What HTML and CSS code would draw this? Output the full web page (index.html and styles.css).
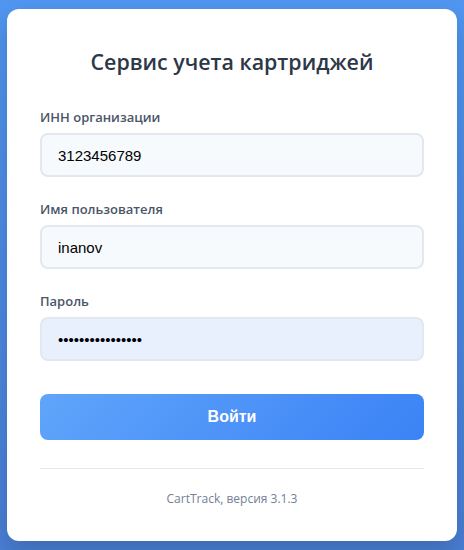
FILE: index.html
```html
<!DOCTYPE html>
<html lang="ru">
<head>
<meta charset="utf-8">
<title>Сервис учета картриджей</title>
<link rel="stylesheet" href="styles.css">
</head>
<body>
<main class="card">
  <h1 class="title">Сервис учета картриджей</h1>
  <form class="form">
    <div class="field">
      <label class="label" for="inn">ИНН организации</label>
      <input class="input" id="inn" type="text" value="3123456789">
    </div>
    <div class="field">
      <label class="label" for="user">Имя пользователя</label>
      <input class="input" id="user" type="text" value="inanov">
    </div>
    <div class="field">
      <label class="label" for="pass">Пароль</label>
      <input class="input input-filled" id="pass" type="password" value="1234567890123456">
    </div>
    <button class="button" type="button">Войти</button>
  </form>
  <hr class="divider">
  <p class="footer">CartTrack, версия 3.1.3</p>
</main>
</body>
</html>
```
FILE: styles.css
```css
* { box-sizing: border-box; }
html, body { height: 100%; }
body {
  margin: 0;
  min-height: 100vh;
  display: flex;
  align-items: center;
  justify-content: center;
  background: linear-gradient(180deg, #5096f1 0%, #4b88e2 60%, #4a7fd5 100%);
  font-family: "Open Sans", "Noto Sans", sans-serif;
}
.card {
  width: 450px;
  background: #ffffff;
  border-radius: 12px;
  padding: 38px 33px 33px;
  box-shadow: 0 10px 25px rgba(0, 0, 0, 0.18);
}
.title {
  margin: 0 0 31px;
  font-size: 21.4px;
  line-height: 29px;
  font-weight: 600;
  color: #2d3748;
  text-align: center;
}
.form { display: flex; flex-direction: column; }
.field { display: flex; flex-direction: column; margin-bottom: 22px; }
.label {
  font-size: 13px;
  line-height: 20px;
  font-weight: 600;
  color: #4a5568;
  margin-bottom: 6px;
}
.input {
  height: 44px;
  border: 2px solid #e2e8f0;
  border-radius: 8px;
  background: #f7fafc;
  padding: 0 16px;
  font-family: "Liberation Sans", Arial, sans-serif;
  font-size: 15px;
  color: #000;
  outline: none;
}
.input-filled { background: #e8f0fe; }
.button {
  margin-top: 11px;
  height: 46px;
  border: none;
  border-radius: 8px;
  background: linear-gradient(135deg, #60a5fa 0%, #3b82f6 100%);
  color: #fff;
  font-family: "Liberation Sans", Arial, sans-serif;
  font-size: 16px;
  font-weight: 700;
}
.divider {
  margin: 28px 0 0;
  border: none;
  border-top: 1px solid #e2e8f0;
}
.footer {
  margin: 21px 0 0;
  font-size: 12px;
  line-height: 18px;
  color: #718096;
  text-align: center;
}
```
